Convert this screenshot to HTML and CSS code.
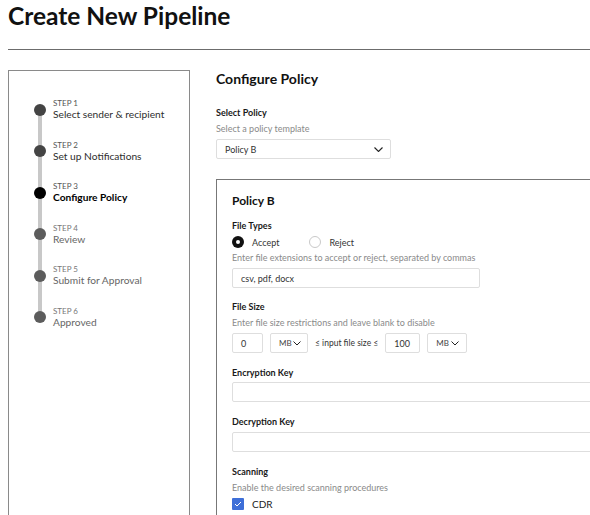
FILE: index.html
```html
<!DOCTYPE html>
<html lang="en">
<head>
<meta charset="utf-8">
<title>Create New Pipeline</title>
<link rel="stylesheet" href="styles.css">
</head>
<body>
<div class="page">
  <h1 class="title">Create New Pipeline</h1>
  <hr class="rule">
  <div class="layout">
    <aside class="sidebar">
      <ol class="steps">
        <li class="step done"><span class="dot"></span><div class="step-text"><span class="step-num">STEP 1</span><span class="step-name">Select sender &amp; recipient</span></div></li>
        <li class="step done"><span class="dot"></span><div class="step-text"><span class="step-num">STEP 2</span><span class="step-name">Set up Notifications</span></div></li>
        <li class="step current"><span class="dot"></span><div class="step-text"><span class="step-num">STEP 3</span><span class="step-name">Configure Policy</span></div></li>
        <li class="step todo"><span class="dot"></span><div class="step-text"><span class="step-num">STEP 4</span><span class="step-name">Review</span></div></li>
        <li class="step todo"><span class="dot"></span><div class="step-text"><span class="step-num">STEP 5</span><span class="step-name">Submit for Approval</span></div></li>
        <li class="step todo"><span class="dot"></span><div class="step-text"><span class="step-num">STEP 6</span><span class="step-name">Approved</span></div></li>
      </ol>
    </aside>
    <main class="main">
      <h2 class="section-title">Configure Policy</h2>
      <div class="field first">
        <div class="label">Select Policy</div>
        <div class="help">Select a policy template</div>
        <div class="select policy-select"><span>Policy B</span><svg class="chev" width="9" height="5" viewBox="0 0 9 5"><polyline points="0.5,0.5 4.5,4.5 8.5,0.5" fill="none" stroke="#222" stroke-width="1.1"/></svg></div>
      </div>
      <section class="card">
        <h3 class="card-title">Policy B</h3>
        <div class="group g-types">
          <div class="label">File Types</div>
          <div class="radios">
            <span class="radio on"></span><span class="radio-text">Accept</span>
            <span class="radio off"></span><span class="radio-text">Reject</span>
          </div>
          <div class="help">Enter file extensions to accept or reject, separated by commas</div>
          <div class="input ext">csv, pdf, docx</div>
        </div>
        <div class="group g-size">
          <div class="label">File Size</div>
          <div class="help">Enter file size restrictions and leave blank to disable</div>
          <div class="size-row">
            <div class="input num-min">0</div>
            <div class="select unit"><span>MB</span><svg class="chev" width="8" height="5" viewBox="0 0 8 5"><polyline points="0.5,0.5 4,4 7.5,0.5" fill="none" stroke="#222" stroke-width="1"/></svg></div>
            <span class="size-text">≤ input file size ≤</span>
            <div class="input num-max">100</div>
            <div class="select unit unit2"><span>MB</span><svg class="chev" width="8" height="5" viewBox="0 0 8 5"><polyline points="0.5,0.5 4,4 7.5,0.5" fill="none" stroke="#222" stroke-width="1"/></svg></div>
          </div>
        </div>
        <div class="group g-enc">
          <div class="label">Encryption Key</div>
          <div class="input full"></div>
        </div>
        <div class="group g-dec">
          <div class="label">Decryption Key</div>
          <div class="input full"></div>
        </div>
        <div class="group g-scan">
          <div class="label">Scanning</div>
          <div class="help">Enable the desired scanning procedures</div>
          <div class="check-row">
            <span class="checkbox"><svg width="8" height="6" viewBox="0 0 8 6"><polyline points="1,3 3,5 7,1" fill="none" stroke="#fff" stroke-width="1"/></svg></span>
            <span class="check-text">CDR</span>
          </div>
        </div>
      </section>
    </main>
  </div>
</div>
</body>
</html>
```
FILE: styles.css
```css
* { box-sizing: border-box; }
html, body { margin: 0; padding: 0; background: #fff; }
body {
  font-family: Lato, "Open Sans", sans-serif;
  color: #222;
  overflow: hidden;
  width: 590px;
  height: 515px;
}
.page { padding-left: 8px; width: 700px; }
.title {
  margin: 2px 0 0;
  font-size: 24.5px;
  line-height: 28px;
  font-weight: 700;
  color: #111;
}
.rule {
  margin: 19px 0 0;
  width: 582px;
  height: 0;
  border: 0;
  border-top: 1px solid #6c6c6c;
}
.layout {
  display: flex;
  align-items: flex-start;
  margin-top: 20px;
}
.sidebar {
  width: 182px;
  flex: none;
  height: 520px;
  border: 1px solid #8a8a8a;
  padding: 27px 0 0 25px;
}
.steps {
  list-style: none;
  margin: 0;
  padding: 0;
  display: flex;
  flex-direction: column;
  gap: 18.5px;
  background: linear-gradient(#c8c8c8, #c8c8c8) no-repeat;
  background-size: 4px calc(100% - 23px);
  background-position: 4px 11.5px;
}
.step { display: flex; align-items: center; gap: 7px; }
.dot { width: 12px; height: 12px; border-radius: 50%; flex: none; background: #444; }
.step-text { display: flex; flex-direction: column; }
.step-num { font-size: 8px; line-height: 10px; color: #555; }
.step-name { font-size: 10.2px; line-height: 13px; color: #2e2e2e; }
.step.current .dot { background: #000; }
.step.current .step-name { color: #000; font-weight: 700; }
.step.todo .dot { background: #5c5c5c; }
.step.todo .step-num { color: #777; }
.step.todo .step-name { color: #666; }

.main { margin-left: 26px; width: 420px; flex: none; }
.section-title { margin: 0; font-size: 14px; line-height: 17px; font-weight: 700; color: #111; }
.field.first { margin-top: 20px; }
.label { font-size: 9px; line-height: 12px; font-weight: 700; color: #1a1a1a; }
.help { font-size: 9px; line-height: 11px; color: #8a8a8a; margin-top: 4px; }
.select, .input {
  height: 20px;
  border: 1px solid #dedede;
  border-radius: 2px;
  font-size: 9px;
  color: #333;
  display: flex;
  align-items: center;
  padding-left: 8px;
}
.select { justify-content: space-between; padding-right: 7px; }
.policy-select { width: 175px; margin-top: 5px; }
.card {
  margin-top: 20px;
  border: 1px solid #777;
  padding: 13px 15px 0;
  height: 360px;
}
.card-title { margin: 0; font-size: 12px; line-height: 15px; font-weight: 700; color: #111; }
.group { margin-top: 14px; }
.group.g-types { margin-top: 12px; }
.group.g-size { margin-top: 13px; }
.radios { display: flex; align-items: center; margin-top: 4px; height: 12px; }
.radio { width: 12px; height: 12px; border-radius: 50%; flex: none; }
.radio.on { background: #111; position: relative; }
.radio.on::after {
  content: "";
  position: absolute;
  left: 4px; top: 4px;
  width: 4px; height: 4px;
  border-radius: 50%;
  background: #fff;
}
.radio.off { border: 1px solid #c9c9c9; margin-left: 30px; }
.radio-text { font-size: 9px; color: #333; margin-left: 8px; }
.input.ext { width: 248px; margin-top: 5px; }
.size-row { display: flex; align-items: center; margin-top: 5px; gap: 7px; }
.num-min { width: 31px; }
.unit { width: 38px; padding-left: 8px; padding-right: 6px; font-size: 8px; color: #444; }
.unit2 { width: 40px; padding-right: 7px; }
.num-max { width: 35px; }
.size-text { font-size: 8.5px; color: #333; }
.g-enc .input.full { margin-top: 3px; }
.input.full { width: 100%; margin-top: 4px; }
.check-row { display: flex; align-items: center; margin-top: 5px; gap: 8px; }
.checkbox {
  width: 12px; height: 12px;
  border-radius: 1px;
  background: #3e6fd8;
  display: flex; align-items: center; justify-content: center;
}
.check-text { font-size: 10px; color: #222; }
```
